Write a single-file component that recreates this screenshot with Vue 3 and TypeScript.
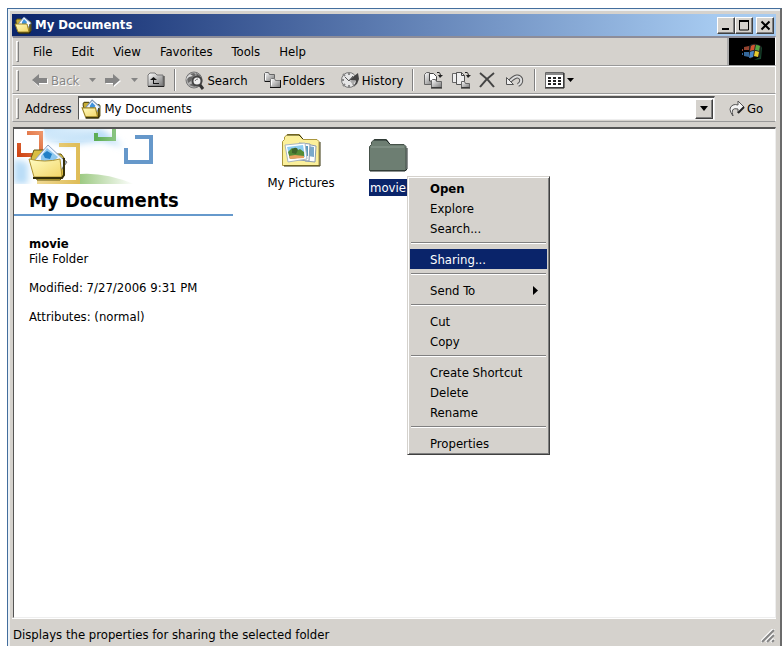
<script setup lang="ts">
import { ref } from 'vue'

interface MenuEntry {
  label: string
  strong?: boolean
  submenu?: boolean
}

const menus: string[] = ['File', 'Edit', 'View', 'Favorites', 'Tools', 'Help']
const contextGroups: MenuEntry[][] = [
  [{ label: 'Open', strong: true }, { label: 'Explore' }, { label: 'Search...' }],
  [{ label: 'Sharing...' }],
  [{ label: 'Send To', submenu: true }],
  [{ label: 'Cut' }, { label: 'Copy' }],
  [{ label: 'Create Shortcut' }, { label: 'Delete' }, { label: 'Rename' }],
  [{ label: 'Properties' }],
]
const active = ref('Sharing...')
const address = ref('My Documents')
</script>

<template>
  <main class="window">
    <svg class="defs" width="0" height="0" aria-hidden="true">
      <defs>
        <linearGradient id="gYellow" x1="0" y1="0" x2="1" y2="1">
          <stop offset="0" stop-color="#fffbc0" /><stop offset="1" stop-color="#f2d668" />
        </linearGradient>
        <linearGradient id="gGrey" x1="0" y1="0" x2="1" y2="1">
          <stop offset="0" stop-color="#ffffff" /><stop offset="1" stop-color="#777777" />
        </linearGradient>
        <symbol id="docs" viewBox="0 0 18 18">
          <path d="M2 6V4l1-1h4l2 2h7l1 1v9l-2 2H5z" fill="#c9ae35" stroke="#5b5012" />
          <path d="M4 8l6-7 7 6-3 5H6z" fill="#f4f8ff" stroke="#7b95b5" />
          <path d="M8 6l2-3 3 3-1 2H8z" fill="#3f93dd" />
          <path d="M1 8h12l2 8H4z" fill="url(#gYellow)" stroke="#9c8424" />
          <path d="M4 17h12V8" fill="none" stroke="#2d2808" />
        </symbol>
      </defs>
    </svg>

    <header class="title">
      <svg class="title-icon" width="18" height="18" aria-hidden="true"><use href="#docs" /></svg>
      <h1>My Documents</h1>
      <button class="cap" aria-label="Minimize"><svg width="10" height="10"><path d="M1 9h7" stroke="#000" stroke-width="2" /></svg></button>
      <button class="cap" aria-label="Maximize"><svg width="12" height="12"><path d="M1.5 1v10h9V1" fill="none" stroke="#000" /><path d="M1 2h10" stroke="#000" stroke-width="2" /></svg></button>
      <button class="cap close" aria-label="Close"><svg width="11" height="11"><path d="M1.500 1.500l8 8M9.500 1.500l-8 8" stroke="#000" stroke-width="2" /></svg></button>
    </header>

    <nav class="band menubar" aria-label="Menu bar">
      <span class="grip"></span>
      <button v-for="m in menus" :key="m">{{ m }}</button>
      <span class="brand">
        <svg width="24" height="20" viewBox="0 0 24 20" role="img" aria-label="Windows">
          <path d="M9 4q4-4 10-1l2 1-1 11q-5-2-9 1l-1 1z" fill="#252525" />
          <path d="M11 4q3-2 4-1l-1 5q-2 0-4 1z" fill="#d2552f" />
          <path d="M16 3q2 0 4 1l-1 5q-2-1-4-1z" fill="#55a641" />
          <path d="M10 10q2-1 4-1l-1 6-4 1z" fill="#4a88ca" />
          <path d="M15 9q2 0 4 1l-1 5-4-1z" fill="#e7ca2d" />
          <path d="M4 5l5-1v4H4zM2 7h1v2H2z" fill="#94432f" />
          <path d="M4 10h5v5l-5-1zM2 11h1v2H2z" fill="#35689b" />
          <path d="M21 4l1 2-1 11-7 1 6-3z" fill="#17462d" />
        </svg>
      </span>
    </nav>

    <div class="band toolbar" role="toolbar" aria-label="Standard buttons">
      <span class="grip"></span>
      <button class="back" disabled>
        <svg width="16" height="13" viewBox="0 0 16 13"><path d="M7 2v3h9v5H7v3L1 7z" fill="#fff" /><path d="M7 0v4h8v5H7v3L0 6z" fill="#858585" /></svg>
        <span>Back</span>
      </button>
      <button class="drop" disabled aria-label="Back history"><svg width="7" height="4"><path d="M0 0h7L3.500 4z" fill="#858585" /></svg></button>
      <button class="forward" disabled aria-label="Forward">
        <svg width="16" height="13" viewBox="0 0 16 13"><path d="M9 2v3H1v5h8v3l7-6z" fill="#fff" /><path d="M8 0v4H0v5h8v3l7-6z" fill="#858585" /></svg>
      </button>
      <button class="drop" disabled aria-label="Forward history"><svg width="7" height="4"><path d="M0 0h7L3.500 4z" fill="#858585" /></svg></button>
      <button class="up" aria-label="Up">
        <svg width="18" height="16" viewBox="0 0 18 16"><path d="M1 14V3l2-2h5l2 2h6v11z" fill="url(#gGrey)" stroke="#777" /><path d="M1 14.500h16V4" fill="none" stroke="#222" /><path d="M6 11.500h6M6.500 12V6" fill="none" stroke="#111" /><path d="M3 8l3.500-3L10 8z" fill="#111" /></svg>
      </button>
      <span class="sep"></span>
      <button class="search">
        <svg width="20" height="19" viewBox="0 0 20 19"><circle cx="9" cy="9" r="8" fill="#b4b4b4" stroke="#777" /><path d="M2 7l3-4 4-1 2 2-3 2-2 4-3 2zM11 2l5 3-4 1zM4 14l4-2 2 4" fill="#686868" /><path d="M5 3q-3 2-4 6l3-3 4-1z" fill="#ddd" /><circle cx="12" cy="10" r="4.500" fill="#eee" stroke="#444" stroke-width="2" /><path d="M15 14l3 4" stroke="#333" stroke-width="3" /><path d="M10 10q1-2 3-2" fill="none" stroke="#777" /></svg>
        <span>Search</span>
      </button>
      <button class="folders">
        <svg width="18" height="18" viewBox="0 0 18 18"><path d="M1.500 10.500v-8l1-1h3l1 2h5v7z" fill="url(#gGrey)" stroke="#666" /><path d="M7.500 16.500v-8l1-1h3l1 2h5v7z" fill="url(#gGrey)" stroke="#777" /><path d="M7 16.500h10.500V9M2 10.500h5" fill="none" stroke="#111" /><path d="M8.500 9.500v5M2.500 4v5" stroke="#fff" /></svg>
        <span>Folders</span>
      </button>
      <button class="history">
        <svg width="20" height="18" viewBox="0 0 20 18"><circle cx="9" cy="9" r="7.500" fill="#e6e6e6" stroke="#777" /><path d="M9 1v3M1 9h3M3 3l2 2M3 15l2-2M9 17v-3M15 15l-2-2" stroke="#888" stroke-width="2" /><path d="M9 9l9-7 1 6-2 5-6 4q5-3 5-7z" fill="#444" /><path d="M5 6l4 4 4-5" fill="none" stroke="#555" /><path d="M10 10l6-1-3 5z" fill="#aaa" /></svg>
        <span>History</span>
      </button>
      <span class="sep"></span>
      <button class="tool" aria-label="Move To">
        <svg width="20" height="18" viewBox="0 0 20 18"><path d="M1.500 13.500v-10l2-2h3l1 2h3v10z" fill="url(#gGrey)" stroke="#666" /><path d="M6.500 10V2.500h4l3 3V10z" fill="#fff" stroke="#444" /><path d="M8.500 16.500v-7l1-1h3l1 2h5v6z" fill="url(#gGrey)" stroke="#666" /><path d="M8 17h11" stroke="#111" /><path d="M14 1.500h2q1.500 0 1.500 4" fill="none" stroke="#222" /><path d="M15 4h5l-3 3z" fill="#222" /></svg>
      </button>
      <button class="tool" aria-label="Copy To">
        <svg width="20" height="18" viewBox="0 0 20 18"><path d="M1.500 11.500v-9h6v9z" fill="#eee" stroke="#666" /><path d="M5.500 13.500v-12h5l3 3v9z" fill="#eee" stroke="#555" /><path d="M10.500 1.500v3h3" fill="none" stroke="#444" /><path d="M10.500 16.500v-6h3l1 2h4v4z" fill="url(#gGrey)" stroke="#666" /><path d="M10 17h9" stroke="#111" /><path d="M14 1.500h2q1.500 0 1.500 4" fill="none" stroke="#222" /><path d="M15 4h5l-3 3z" fill="#222" /></svg>
      </button>
      <button class="tool" aria-label="Delete">
        <svg width="18" height="18" viewBox="0 0 18 18"><path d="M1 2q8 6 14 14M15 2Q7 8 1 16" fill="none" stroke="#444" stroke-width="2" /></svg>
      </button>
      <button class="tool" aria-label="Undo">
        <svg width="20" height="18" viewBox="0 0 20 18"><path d="M5 10q8-8 11-2 1 4-3 6" fill="none" stroke="#555" stroke-width="4" /><path d="M5 10q8-8 11-2 1 4-3 6" fill="none" stroke="#ddd" stroke-width="2" /><path d="M1.500 6.500v7h7z" fill="#eee" stroke="#555" /></svg>
      </button>
      <span class="sep"></span>
      <button class="views" aria-label="Views">
        <svg width="20" height="17" viewBox="0 0 20 17"><path d="M.5.500h18v15H.5z" fill="#fff" stroke="#666" /><path d="M1 2h17" stroke="#888" stroke-width="2" /><path d="M3 6h3M8 6h3M13 6h3M3 9h3M8 9h3M13 9h3M3 12h3M8 12h3M13 12h3" stroke="#222" stroke-width="2" /><path d="M0 16h19V1" fill="none" stroke="#111" /></svg>
        <svg width="7" height="4"><path d="M0 0h7L3.500 4z" /></svg>
      </button>
    </div>

    <form class="band address" @submit.prevent>
      <span class="grip"></span>
      <label for="address">Address</label>
      <div class="combo">
        <svg width="20" height="20" aria-hidden="true"><use href="#docs" /></svg>
        <input id="address" v-model="address" type="text" />
        <button type="button" aria-label="Show addresses"><svg width="8" height="5"><path d="M0 0h8L4 5z" /></svg></button>
      </div>
      <button class="go" type="submit">
        <svg width="16" height="17" viewBox="0 0 16 17"><path d="M4 16Q-2 8 4 5q2-1 5 0V1l6 6-6 6V9Q1 7 4 16z" fill="#f4f4f4" stroke="#555" /><path d="M9 13l6-6" stroke="#222" stroke-width="2" /></svg>
        <span>Go</span>
      </button>
    </form>

    <section class="content">
      <aside>
        <svg class="banner" width="140" height="55" viewBox="0 0 140 55" aria-hidden="true">
          <defs>
            <linearGradient id="sky" x1="0" y1="0" x2="1" y2="1"><stop offset="0" stop-color="#c4e3fa" /><stop offset="1" stop-color="#fff" stop-opacity="0" /></linearGradient>
            <linearGradient id="grass"><stop offset="0" stop-color="#9dca83" /><stop offset="1" stop-color="#fff" /></linearGradient>
            <linearGradient id="orange" x1="1" y1="0" x2="0" y2="1"><stop offset="0" stop-color="#ed9468" /><stop offset="1" stop-color="#cf4514" /></linearGradient>
            <linearGradient id="gold"><stop offset="0" stop-color="#eed78f" /><stop offset="1" stop-color="#dfbd59" /></linearGradient>
            <linearGradient id="greenLine"><stop offset="0" stop-color="#5cad55" /><stop offset="1" stop-color="#87c37f" /></linearGradient>
            <filter id="soft"><feGaussianBlur stdDeviation="3" /></filter>
          </defs>
          <path d="M30 0h58l22 18-22-6-34 4-22-5zM0 30l14 4v21H0z" fill="#b9ddf7" filter="url(#soft)" />
          <path d="M30 0h52v12H34z" fill="url(#sky)" />
          <path d="M66 45q24-2 54 10H66z" fill="url(#grass)" />
          <path d="M45 16h19v37H25V42" fill="none" stroke="url(#gold)" stroke-width="4" />
          <path d="M13 4h14v22H5V14" fill="none" stroke="url(#orange)" stroke-width="4" />
          <path d="M82 4v6h18V0" fill="none" stroke="url(#greenLine)" stroke-width="4" />
          <path d="M112 19v14h25V8h-16" fill="none" stroke="#6698ca" stroke-width="4" />
          <path d="M17 29l3-8h10l5 4h12l3 4v18l-4 4H23z" fill="#d8bd42" stroke="#655915" />
          <path d="M20 32l14-16 18 17-8 13H22z" fill="#edf5ff" stroke="#8aa0c1" />
          <path d="M27 27l6-8 11 9-7 7-10-3z" fill="#8fc8ef" /><path d="M29 25l4-3 5 3-2 5-5-1z" fill="#207fc5" />
          <path d="M48 29l5 4-7 10" fill="none" stroke="#777" />
          <path d="M15 30q16 4 31 0l2 18H20z" fill="url(#gYellow)" stroke="#ad9130" /><path d="M19 49h29l2-3V29" fill="none" stroke="#363008" stroke-width="2" />
        </svg>
        <h2>My Documents</h2>
        <div class="details">
          <p><strong>movie</strong><br />File Folder</p>
          <p>Modified: 7/27/2006 9:31 PM</p>
          <p>Attributes: (normal)</p>
        </div>
      </aside>
      <div class="files">
        <button class="file">
          <svg width="40" height="34" viewBox="0 0 40 34"><path d="M1.500 31.500V7.500l2-2V3l3-2.500h12L22 5.500h14l2 2v24z" fill="#fbf09b" stroke="#aa963d" /><path d="M3 32h36V8M6 1h12l4 4" fill="none" stroke="#37320b" /><path d="M25 10l10 2-1 16-10-1z" fill="#fff" stroke="#8b9cae" /><path d="M27 12l6 1v10l-6-1z" fill="#7baacb" /><path d="M18 9l11 1-1 17-11-1z" fill="#fff" stroke="#8b9cae" /><path d="M20 12h7v10h-7z" fill="#5999bc" /><path d="M4 11l20-2 2 16-19 3z" fill="#fff" stroke="#a8b6c1" /><path d="M6 13l16-2 2 12-15 2z" fill="#8dcdf0" /><path d="M7 18l4-4 4 3 4-2 4 3v5L9 25z" fill="#548b35" /><path d="M8 22l6-1 9 1v2L9 25z" fill="#e8a15f" /><path d="M11 15q5-3 6 1l-2 4-4-1z" fill="#3d6429" /></svg>
          <span>My Pictures</span>
        </button>
        <button class="file selected">
          <svg width="40" height="34" viewBox="0 0 40 34"><path d="M1.500 31.500V7.500l2-2V3l3-2.500h12L22 5.500h14l2 2v24z" fill="#6d7e72" stroke="#455149" /><path d="M3 8h33" stroke="#8d9c91" /><path d="M2 32h35l2-2V9M6 1h12l4 4" fill="none" stroke="#1f2927" /></svg>
          <span>movie</span>
        </button>
      </div>
    </section>

    <footer>
      <span>Displays the properties for sharing the selected folder</span>
      <svg width="14" height="14" viewBox="0 0 14 14" aria-hidden="true"><path d="M0 13L13 0M5 13l8-8M10 13l3-3" stroke="#fff" stroke-width="3" /><path d="M1 13L13 1M6 13l7-7M11 13l2-2" stroke="#858585" stroke-width="2" /></svg>
    </footer>

    <div class="context" role="menu" aria-label="Folder actions">
      <div v-for="(group, i) in contextGroups" :key="i" class="group" role="group">
        <button v-for="item in group" :key="item.label" role="menuitem" :class="{ strong: item.strong, active: item.label === active }" @mouseenter="active = item.label">
          <span>{{ item.label }}</span>
          <svg v-if="item.submenu" width="5" height="9"><path d="M0 0v9l5-4.500z" /></svg>
        </button>
      </div>
    </div>
  </main>
</template>

<style>
body { background: #fff; }
#app { min-height: 100vh; display: flex; padding: 8px 0 0 7px; box-sizing: border-box; }
</style>

<style scoped>
* { box-sizing: border-box; }
.window { flex: 1; min-width: 0; display: flex; flex-direction: column; padding: 5px 4px 0; border: 1px solid #436e9d; border-right: 2px solid #6b6b6b; border-bottom: 0; background: #d5d2cd; box-shadow: inset 2px 2px #eef2f5; font: 13px/15px "DejaVu Sans Condensed", Tahoma, sans-serif; color: #000; }
.defs { position: absolute; }
button, input { font: inherit; color: inherit; }
button { border: 0; padding: 0; background: none; display: flex; align-items: center; white-space: nowrap; }
svg { flex: none; display: block; }
.title { height: 22px; flex: none; display: flex; align-items: center; padding: 0 2px; background: linear-gradient(90deg, #0a246a, #a6caf0 92%); color: #fff; }
h1 { flex: 1; margin: 0 0 0 3px; font-size: 13px; line-height: 16px; }
.cap { width: 18px; height: 17px; justify-content: center; background: #d5d2cd; border: 1px solid; border-color: #fff #404040 #404040 #fff; box-shadow: inset -1px -1px #808080; }
.close { margin-left: 3px; }
.band { display: flex; align-items: center; height: 28px; border: 1px solid; border-color: #fff #fff #999 #eee; flex: none; }
.grip { width: 3px; height: 21px; margin-left: 3px; border: 1px solid; border-color: #fff #808080 #808080 #fff; flex: none; }
.menubar { height: 30px; border-top: 2px solid #8d8d99; }
.menubar button { margin-left: 19px; }
.menubar .grip { margin-right: -5px; }
.brand { margin-left: auto; align-self: stretch; width: 46px; display: grid; place-items: center; background: #000; box-shadow: -2px 0 #aaa; }
.back { margin-left: 13px; gap: 3px; color: #858585; text-shadow: 1px 1px #fff; }
.drop { width: 26px; justify-content: center; }
.sep { width: 2px; height: 22px; border-left: 1px solid #808080; border-right: 1px solid #fff; margin: 0 9px; flex: none; }
.search, .folders, .history { gap: 2px; }
.folders, .history { margin-left: 15px; }
.tool + .tool { margin-left: 8px; }
.views { gap: 2px; }
.address label { margin: 0 6px; }
.combo { display: flex; flex: 1; min-width: 0; height: 24px; align-items: center; padding: 1px 1px 1px 2px; background: #fff; border: 1px solid; border-top: 2px solid #555; border-color: #555 #eee #eee #555; }
.combo input { flex: 1; min-width: 0; height: 20px; padding: 0 4px; border: 0; background: transparent; outline: 0; }
.combo button { width: 18px; height: 20px; justify-content: center; background: #d5d2cd; border: 1px solid; border-color: #fff #404040 #404040 #fff; box-shadow: inset -1px -1px #808080; }
.go { width: 60px; padding-left: 14px; gap: 2px; }
.content { display: flex; flex: 1; min-height: 300px; margin: 5px 0 0 1px; border: 1px solid; border-top: 2px solid #555; border-color: #555 #eee #eee #555; background: #fff; }
aside { flex: none; width: 219px; }
h2 { margin: 0; padding: 4px 0 2px 15px; font-size: 20px; line-height: 24px; border-bottom: 2px solid #6699cc; }
.details { padding: 20px 0 0 15px; }
.details p { margin: 0 0 14px; }
.files { display: flex; gap: 7px; padding: 5px 0 0 28px; align-items: flex-start; }
.file { width: 80px; flex-direction: column; gap: 6px; }
.file + .file { padding-top: 5px; }
.file span { padding: 0 1px; line-height: 17px; }
.selected span { background: #0a246a; color: #fff; }
footer { display: flex; align-items: center; justify-content: space-between; height: 28px; flex: none; padding: 3px 1px 0; border-top: 1px solid #fff; }
footer svg { align-self: flex-end; margin-bottom: 3px; }
.context { position: absolute; left: 407px; top: 176px; width: 143px; padding: 1px; background: #d5d2cd; border: 1px solid; border-color: #d5d2cd #404040 #404040 #d5d2cd; box-shadow: inset 1px 1px #fff, inset -1px -1px #808080; }
.context button { width: 100%; height: 20px; padding: 0 9px 0 20px; justify-content: space-between; }
.context .strong { font-weight: bold; }
.context .active { background: #0a246a; color: #fff; }
.group { padding: 0 1px; }
.group + .group::before { content: ""; display: block; margin: 4px 1px 5px; border-top: 1px solid #808080; border-bottom: 1px solid #fff; }
</style>
